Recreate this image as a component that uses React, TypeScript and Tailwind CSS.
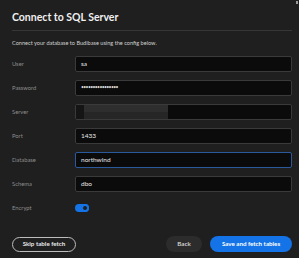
import * as React from "react";

const rows = [
  { label: "User", value: "sa" },
  { label: "Password", value: "••••••••••••••••", password: true },
  { label: "Server", value: "", redacted: true },
  { label: "Port", value: "1433" },
  { label: "Database", value: "northwind", focused: true },
  { label: "Schema", value: "dbo" },
];

export default function App() {
  return (
    <div className="relative h-[258px] w-[299px] overflow-hidden bg-[#1f1f1f] pl-3 pr-[7px] pt-[11px] font-['Lato',sans-serif] text-white">
      <span className="absolute right-[1px] top-[1px] h-[3px] w-[2px] bg-[#9a9a9a]" />
      <h1 className="h-[13px] text-[10.5px] font-bold leading-[13px] text-[#f0f0f0]">
        Connect to SQL Server
      </h1>
      <div className="mt-[6px] h-px bg-[#363636]" />
      <p className="mt-[8px] h-[8px] text-[5.6px] leading-[8px] text-[#cfcfcf]">
        Connect your database to Budibase using the config below.
      </p>

      <div className="mt-[9px] flex flex-col gap-2">
        {rows.map((row) => (
          <div key={row.label} className="flex h-4 items-center">
            <label className="w-[63px] text-[5.8px] text-[#8c8c8c]">
              {row.label}
            </label>
            <div
              className={`flex h-4 flex-1 items-center rounded-[2px] border bg-[#0b0b0b] ${
                row.focused ? "border-[#2b5a9c]" : "border-[#3a3a3a]"
              } ${row.redacted ? "overflow-hidden" : "px-[5px]"}`}
            >
              {row.redacted ? (
                <>
                  <div className="h-full w-[8px] bg-[#151515]" />
                  <div className="flex h-full w-[84px] flex-col">
                    <div className="h-1/2 bg-[#2e2e2e]" />
                    <div className="h-1/2 bg-[#262626]" />
                  </div>
                </>
              ) : (
                <span
                  className={
                    row.password
                      ? "text-[5px] tracking-[-0.6px] text-[#d8d8d8]"
                      : "text-[6.5px] text-[#e8e8e8]"
                  }
                >
                  {row.value}
                </span>
              )}
            </div>
          </div>
        ))}

        <div className="flex h-4 items-center">
          <label className="w-[63px] text-[5.8px] text-[#8c8c8c]">Encrypt</label>
          <div className="flex h-[8px] w-[14px] items-center justify-end rounded-full bg-[#1473e6]">
            <div className="h-[8px] w-[8px] rounded-full border-[2px] border-[#1473e6] bg-[#1f1f1f]" />
          </div>
        </div>
      </div>

      <div className="mt-5 flex items-center justify-between">
        <button className="flex h-[15px] w-[64px] items-center justify-center rounded-full border border-[#bdbdbd] text-[6.2px] font-bold text-[#e6e6e6]">
          Skip table fetch
        </button>
        <div className="flex gap-2">
          <button className="flex h-4 w-[36px] items-center justify-center rounded-full bg-[#2c2c2c] text-[6.2px] font-bold text-[#cfcfcf]">
            Back
          </button>
          <button className="flex h-4 w-[82px] items-center justify-center rounded-full bg-[#1473e6] text-[6.2px] font-bold text-white">
            Save and fetch tables
          </button>
        </div>
      </div>
    </div>
  );
}
